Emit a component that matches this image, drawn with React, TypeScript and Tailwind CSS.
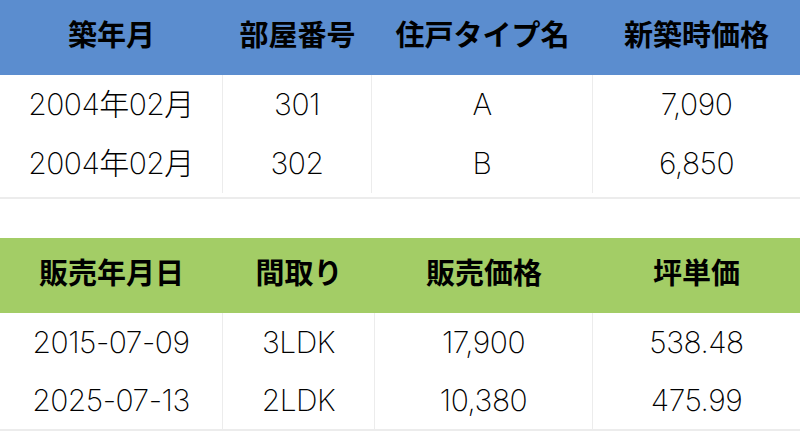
const font = { fontFamily: '"Inter", "Noto Sans CJK JP", sans-serif' }

type Table = {
  head: string
  cols: string
  row: string
  body: string
  headers: string[]
  rows: string[][]
}

const tables: Table[] = [
  {
    head: "bg-[#5b8dcf]",
    cols: "grid-cols-[223px_149px_221px_1fr]",
    row: "h-[59px]",
    body: "pb-[4px]",
    headers: ["築年月", "部屋番号", "住戸タイプ名", "新築時価格"],
    rows: [
      ["2004年02月", "301", "A", "7,090"],
      ["2004年02月", "302", "B", "6,850"],
    ],
  },
  {
    head: "bg-[#a3cd66]",
    cols: "grid-cols-[223px_152px_218px_1fr]",
    row: "h-[58px]",
    body: "pb-0",
    headers: ["販売年月日", "間取り", "販売価格", "坪単価"],
    rows: [
      ["2015-07-09", "3LDK", "17,900", "538.48"],
      ["2025-07-13", "2LDK", "10,380", "475.99"],
    ],
  },
]

function DataTable({ t }: { t: Table }) {
  return (
    <div className="border-b-2 border-[#ececec]">
      <div className={`grid ${t.cols} ${t.head} h-[75px]`}>
        {t.headers.map(h => (
          <div key={h} className="flex items-center justify-center pb-[3px] text-[29px] font-bold text-black">
            {h}
          </div>
        ))}
      </div>
      <div className={`grid ${t.cols} ${t.body}`}>
        {t.headers.map((h, ci) => (
          <div
            key={h}
            className={`flex flex-col ${ci < 3 ? "border-r border-[#ececec]" : ""}`}
          >
            {t.rows.map((r, ri) => (
              <div
                key={ri}
                className={`${t.row} flex items-center justify-center text-[30px] font-extralight text-black tracking-[-0.5px]`}
              >
                {r[ci]}
              </div>
            ))}
          </div>
        ))}
      </div>
    </div>
  )
}

export default function App() {
  return (
    <div className="w-[800px] h-[431px] bg-white overflow-hidden flex flex-col gap-[39px]" style={font}>
      {tables.map((t, i) => (
        <DataTable key={i} t={t} />
      ))}
    </div>
  )
}
